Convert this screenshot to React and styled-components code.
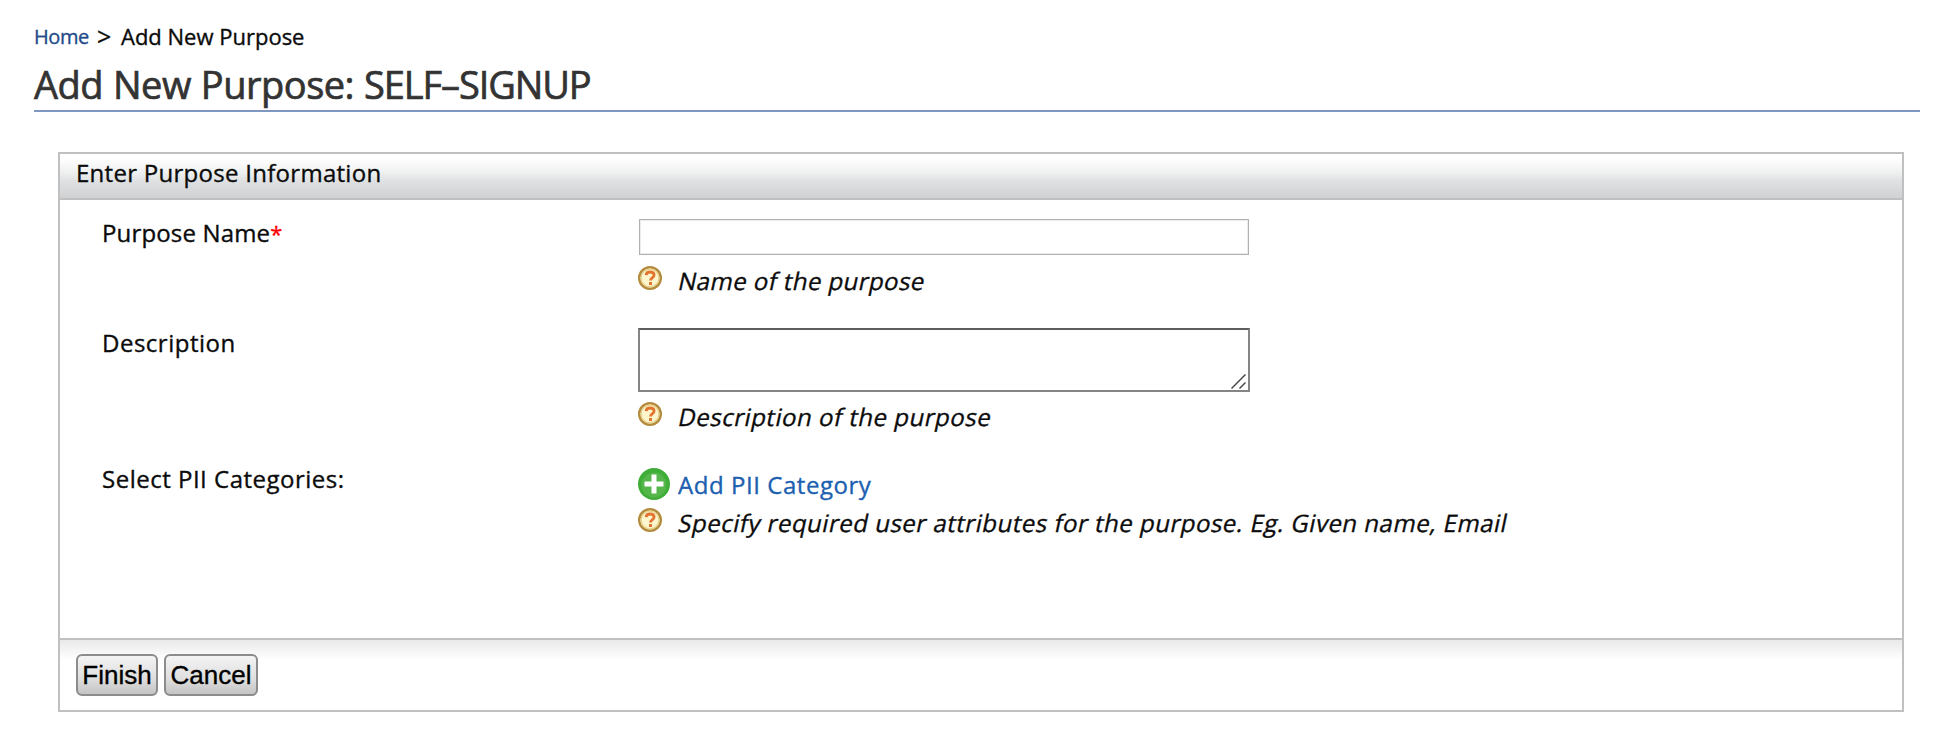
import React from 'react';
import styled, { createGlobalStyle } from 'styled-components';

const GlobalStyle = createGlobalStyle`
  * { box-sizing: border-box; }
  body {
    margin: 0;
    background: #fff;
    color: #0b0b0b;
    font-family: 'Open Sans', 'Noto Sans', sans-serif;
    -webkit-text-stroke: 0.35px currentColor;
  }
`;

const Page = styled.main`
  padding: 20px 20px 0 34px;
`;

const Breadcrumb = styled.nav`
  display: flex;
  height: 32px;
  line-height: 32px;
  font-size: 22px;
  white-space: pre;
`;

const HomeLink = styled.a`
  width: 63px;
  font-size: 20px;
  letter-spacing: -0.4px;
  line-height: 33px;
  color: #1f4b8b;
  text-decoration: none;
`;

const Separator = styled.span`
  width: 24px;
  font-size: 25px;
  line-height: 33px;
`;

const Title = styled.h1`
  margin: 0;
  height: 60px;
  padding-top: 7px;
  border-bottom: 2px solid #7f98c3;
  font-size: 38px;
  line-height: 50px;
  font-weight: 400;
  letter-spacing: -0.5px;
  word-spacing: 0.6px;
  color: #333;
  -webkit-text-stroke-width: 0.7px;
`;

const Tenant = styled.span`
  letter-spacing: -1.1px;
`;

const Panel = styled.section`
  margin: 40px 16px 0 24px;
  border: 2px solid #c0c0c0;
`;

const PanelHeader = styled.h2`
  margin: 0;
  height: 46px;
  padding: 3px 0 0 16px;
  border-bottom: 2px solid #c0c0c0;
  background: linear-gradient(#fff 10%, #eff0f0 42%, #dfe1e3 60%, #d0d1d2);
  font-size: 24px;
  line-height: 32px;
  font-weight: 400;
  letter-spacing: 0.28px;
`;

const Form = styled.div`
  height: 438px;
  padding: 17px 0 0 41px;
`;

const Row = styled.div`
  display: grid;
  grid-template-columns: 537px 1fr;
  height: ${p => p.$height}px;
`;

const Label = styled.label`
  padding-left: 1px;
  font-size: 24px;
  line-height: 32px;
  letter-spacing: ${p => p.$tracking}px;
`;

const Required = styled.span`
  color: #f00;
  font-size: 22px;
`;

const Control = styled.div`
  display: flex;
  flex-direction: column;
  align-items: flex-start;
  padding-top: ${p => p.$top}px;
`;

const TextInput = styled.input`
  width: 610px;
  height: 36px;
  margin: 0 0 10px 1px;
  padding: 0 6px;
  border: 1px solid #b0b0b0;
  box-shadow: inset 0 0 0 1px #ececec;
  font-size: 24px;
  outline: none;
`;

const TextArea = styled.div`
  display: flex;
  align-items: flex-end;
  justify-content: flex-end;
  width: 612px;
  height: 64px;
  margin-bottom: 9px;
  padding: 0 2px 1px 0;
  border: 2px solid #858585;
  border-top-color: #5e5e5e;
`;

const Hint = styled.div`
  display: flex;
  gap: 17px;
  line-height: 32px;
  font-size: 24px;

  svg { margin-top: 1px; }
`;

const HintText = styled.span`
  display: inline-block;
  letter-spacing: ${p => p.$tracking}px;
  transform: skewX(-12deg);
  white-space: nowrap;
`;

const AddLink = styled.a`
  display: flex;
  gap: 8px;
  height: 32px;
  margin-bottom: 7px;
  font-size: 24px;
  line-height: 34px;
  letter-spacing: 0.55px;
  color: #1c5fb0;
`;

const Footer = styled.footer`
  display: flex;
  gap: 6px;
  height: 72px;
  padding: 14px 0 0 16px;
  border-top: 2px solid #c0c0c0;
  background: linear-gradient(#e9e9e9, #fff 20px);
`;

const Button = styled.button`
  width: ${p => p.$width}px;
  height: 42px;
  padding: 0;
  border: 2px solid #8c8c8c;
  border-radius: 6px;
  background: linear-gradient(#f4f4f4, #dedede 60%, #c4c4c4);
  font: 26px/36px 'Liberation Sans', Arial, sans-serif;
  color: #000;
`;

const HelpIcon = () => (
  <svg width="24" height="24" viewBox="0 0 24 24">
    <circle cx="12" cy="12" r="10.8" fill="#fdf5cc" stroke="#b48a3c" strokeWidth="2.4" />
    <circle cx="12" cy="12" r="9" fill="none" stroke="#e6d391" strokeWidth="1.4" />
    <path d="M8.1 9.2C8.3 7 9.8 6 12.1 6c2.400 0 4 1.100 4 3.100 0 2.900-3.600 2.700-3.600 5.400" fill="none" stroke="#e2752f" strokeWidth="2.8" />
    <rect x="11" y="16" width="3" height="3" fill="#e2752f" />
  </svg>
);

const PlusIcon = () => (
  <svg width="32" height="32" viewBox="0 0 32 32">
    <circle cx="16" cy="16" r="16" fill="#3fae38" />
    <circle cx="16" cy="17" r="12.5" fill="#55b64c" />
    <path d="M16 6.500v19M6.500 16h19" stroke="#fff" strokeWidth="5" />
  </svg>
);

const ResizeGrip = () => (
  <svg width="15" height="15" viewBox="0 0 15 15">
    <path d="M0.5 14.5L14.5 0.5M8.5 14.5L14.5 8.5" stroke="#4a4a4a" strokeWidth="1.5" />
  </svg>
);

export default function App() {
  return (
    <>
      <GlobalStyle />
      <Page>
        <Breadcrumb>
          <HomeLink>Home</HomeLink>
          <Separator>&gt;</Separator>
          <span>Add New Purpose</span>
        </Breadcrumb>
        <Title>Add New Purpose: <Tenant>SELF–SIGNUP</Tenant></Title>
        <Panel>
          <PanelHeader>Enter Purpose Information</PanelHeader>
          <Form>
            <Row $height={110}>
              <Label $tracking={0.15}>Purpose Name<Required>*</Required></Label>
              <Control $top={2}>
                <TextInput />
                <Hint><HelpIcon /><HintText $tracking={0.42}>Name of the purpose</HintText></Hint>
              </Control>
            </Row>
            <Row $height={136}>
              <Label $tracking={0.5}>Description</Label>
              <Control $top={1}>
                <TextArea><ResizeGrip /></TextArea>
                <Hint><HelpIcon /><HintText $tracking={0.52}>Description of the purpose</HintText></Hint>
              </Control>
            </Row>
            <Row $height={90}>
              <Label $tracking={0.5}>Select PII Categories:</Label>
              <Control $top={5}>
                <AddLink><PlusIcon />Add PII Category</AddLink>
                <Hint><HelpIcon /><HintText $tracking={0.51}>Specify required user attributes for the purpose. Eg. Given name, Email</HintText></Hint>
              </Control>
            </Row>
          </Form>
          <Footer>
            <Button $width={82}>Finish</Button>
            <Button $width={94}>Cancel</Button>
          </Footer>
        </Panel>
      </Page>
    </>
  );
}
